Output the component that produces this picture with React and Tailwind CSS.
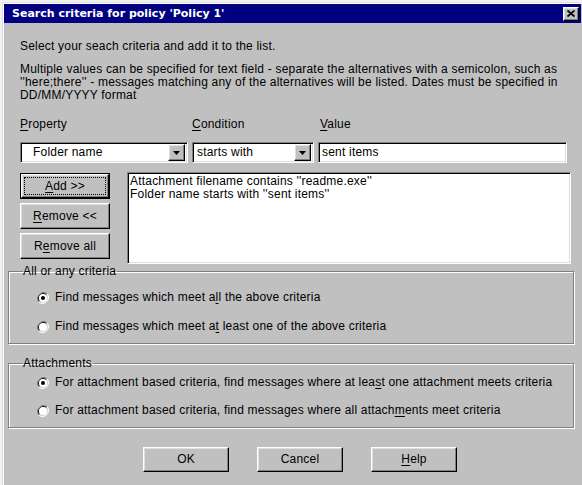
import React from "react";

const raised =
  "border border-t-white border-l-white border-b-black border-r-black shadow-[inset_-1px_-1px_0_#808080,inset_1px_1px_0_#dfdfdf]";
const sunken =
  "border border-t-[#808080] border-l-[#808080] border-b-white border-r-white shadow-[inset_1px_1px_0_#000,inset_-1px_-1px_0_#dfdfdf]";

const Key = ({ children }) => <span className="underline underline-offset-2">{children}</span>;

const DropArrow = () => (
  <div className={`${raised} w-[17px] h-[17px] bg-[#c0c0c0] flex items-center justify-center`}>
    <svg width="7" height="4" viewBox="0 0 7 4">
      <path d="M0 0h7L3.5 4z" fill="#000" />
    </svg>
  </div>
);

const Combo = ({ value, className, textPad }) => (
  <div className={`${sunken} ${className} h-[21px] bg-white flex items-center p-[2px]`}>
    <span className={`flex-1 ${textPad}`}>{value}</span>
    <DropArrow />
  </div>
);

const Radio = ({ checked }) => (
  <svg width="12" height="12" viewBox="0 0 12 12" className="shrink-0">
    <path d="M10.2 1.8A6 6 0 0 0 1.8 10.2" stroke="#808080" fill="none" />
    <path d="M9.5 2.5A5 5 0 0 0 2.5 9.5" stroke="#000" fill="none" />
    <path d="M1.8 10.2A6 6 0 0 0 10.2 1.8" stroke="#fff" fill="none" />
    <path d="M2.5 9.5A5 5 0 0 0 9.5 2.5" stroke="#dfdfdf" fill="none" />
    <circle cx="6" cy="6" r="4" fill="#fff" />
    {checked && <circle cx="6" cy="6" r="2" fill="#000" />}
  </svg>
);

const Option = ({ checked, children }) => (
  <label className="flex items-center gap-[6px] h-[13px] whitespace-nowrap">
    <Radio checked={checked} />
    <span>{children}</span>
  </label>
);

const Group = ({ title, children, className }) => (
  <fieldset
    className={`border border-[#808080] shadow-[1px_1px_0_#fff,inset_1px_1px_0_#fff] ml-[5px] w-[566px] pl-[28px] ${className}`}
  >
    <legend className="ml-[-14px] pr-[1px] leading-[13px]">{title}</legend>
    {children}
  </fieldset>
);

const Btn = ({ children, className = "w-[86px] h-[25px]" }) => (
  <button className={`${raised} bg-[#c0c0c0] ${className}`}>{children}</button>
);

export default function App() {
  return (
    <div className="w-[582px] h-[485px] bg-[#f2f2f2] pl-[2px] pt-[2px] overflow-hidden font-['Liberation_Sans',Arial,sans-serif] text-[12px] tracking-[0.2px] leading-[13px] text-black">
      <div className="h-full bg-[#c0c0c0] border-l border-t border-l-[#dfdfdf] border-t-[#dfdfdf] shadow-[inset_1px_1px_0_#fff]">
        <div className="h-[19px] bg-[#000080] mx-px mt-px flex items-center justify-between pl-[8px] pr-[2px]">
          <span className="text-white font-bold text-[11px] tracking-normal font-['DejaVu_Sans',sans-serif]">
            Search criteria for policy 'Policy 1'
          </span>
          <div className={`${raised} w-[16px] h-[14px] bg-[#c0c0c0] flex items-center justify-center`}>
            <svg width="8" height="7" viewBox="0 0 8 7">
              <path d="M0.5 0.5l7 6M7.5 0.5l-7 6" stroke="#000" strokeWidth="1.8" />
            </svg>
          </div>
        </div>

        <div className="pl-[17px] pt-[17px] whitespace-nowrap">
          <p>Select your seach criteria and add it to the list.</p>
          <p className="mt-[10px]">
            Multiple values can be specified for text field - separate the alternatives with a semicolon, such as
            <br />
            ''here;there'' - messages matching any of the alternatives will be listed. Dates must be specified in
            <br />
            DD/MM/YYYY format
          </p>
        </div>

        <div className="flex mt-[16px] pl-[17px]">
          <div className="w-[172px]">
            <div>
              <Key>P</Key>roperty
            </div>
            <Combo value="Folder name" className="w-[168px] mt-[11px]" textPad="pl-[10px]" />
          </div>
          <div className="w-[126px]">
            <div>
              <Key>C</Key>ondition
            </div>
            <Combo value="starts with" className="w-[122px] mt-[11px]" textPad="pl-[2px]" />
          </div>
          <div>
            <div className="pl-[2px]">
              <Key>V</Key>alue
            </div>
            <div className={`${sunken} w-[249px] h-[21px] mt-[11px] bg-white flex items-center px-[3px]`}>
              sent items
            </div>
          </div>
        </div>

        <div className="flex mt-[9px] pl-[17px] gap-[17px]">
          <div className="flex flex-col gap-[4px] pt-px">
            <button className="w-[90px] h-[26px] border border-black bg-[#c0c0c0]">
              <div className={`${raised} h-full flex items-center justify-center p-[2px]`}>
                <span className="border border-dotted border-black w-full h-full flex items-center justify-center">
                  <Key>A</Key>dd &gt;&gt;
                </span>
              </div>
            </button>
            <Btn className="w-[90px] h-[26px]">
              <Key>R</Key>emove &lt;&lt;
            </Btn>
            <Btn className="w-[90px] h-[26px]">
              R<Key>e</Key>move all
            </Btn>
          </div>
          <div className={`${sunken} w-[444px] h-[92px] bg-white px-[2px] py-[2px]`}>
            <div>Attachment filename contains ''readme.exe''</div>
            <div>Folder name starts with ''sent items''</div>
          </div>
        </div>

        <Group title="All or any criteria" className="mt-[1px] pt-[13px] pb-[10px]">
          <div className="flex flex-col gap-[16px]">
            <Option checked>
              Find messages which meet a<Key>l</Key>l the above criteria
            </Option>
            <Option>
              Find messages which meet a<Key>t</Key> least one of the above criteria
            </Option>
          </div>
        </Group>

        <Group title="Attachments" className="mt-[13px] pt-[6px] pb-[10px]">
          <div className="flex flex-col gap-[15px]">
            <Option checked>
              For attachment based criteria, find messages where at lea<Key>s</Key>t one attachment meets criteria
            </Option>
            <Option>
              For attachment based criteria, find messages where all attach<Key>m</Key>ents meet criteria
            </Option>
          </div>
        </Group>

        <div className="flex gap-[28px] pl-[140px] mt-[19px]">
          <Btn>OK</Btn>
          <Btn>Cancel</Btn>
          <Btn>
            <Key>H</Key>elp
          </Btn>
        </div>
      </div>
    </div>
  );
}
